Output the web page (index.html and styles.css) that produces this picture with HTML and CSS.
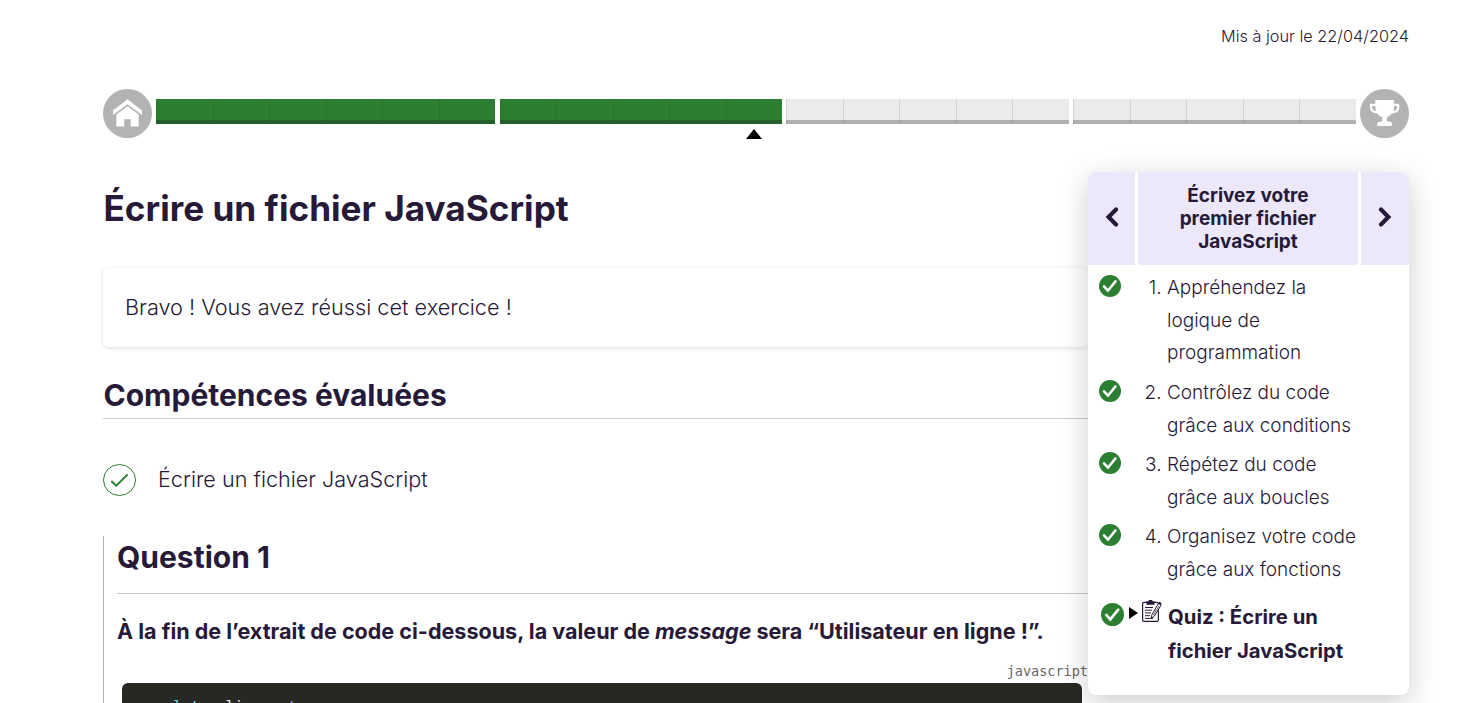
FILE: index.html
```html
<!DOCTYPE html>
<html lang="fr">
<head>
<meta charset="utf-8">
<title>Écrire un fichier JavaScript</title>
<link rel="stylesheet" href="styles.css">
</head>
<body>
<svg class="defs" width="0" height="0" aria-hidden="true">
  <symbol id="done" viewBox="0 0 22 22"><circle cx="11" cy="11" r="11" fill="#2c7f31"/><path d="M5 11.4l3.9 4.3 7.6-9.3" fill="none" stroke="#fff" stroke-width="2.5" stroke-linecap="round"/></symbol>
</svg>
<div class="page">
  <p class="updated">Mis à jour le 22/04/2024</p>
  <nav class="timeline">
    <a class="round"><svg viewBox="0 0 49 49"><path d="M24.5 10.2L10 21.6V26L24.5 15.2 39 26v-4.4z"/><path d="M24.5 17.2L13.4 25.5V37.5h7.8v-7.2h6.5v7.2h8v-12z"/></svg></a>
    <div class="part six done"><i></i><i></i><i></i><i></i><i></i><i></i></div>
    <div class="part five done"><i></i><i></i><i></i><i></i><i class="current"></i></div>
    <div class="part five"><i></i><i></i><i></i><i></i><i></i></div>
    <div class="part five last"><i></i><i></i><i></i><i></i><i></i></div>
    <a class="round"><svg viewBox="0 0 49 49"><path d="M15.3 11h18.8v3.8h5.1v3.8c0 4.2-3.4 5.7-7.4 5.9-1.4 2.1-3.6 3.2-5 4.1v3.2c.5 1.2 5.2.6 5.2 2.8v2.4H17.2v-2.4c0-2.2 4.7-1.6 5.2-2.8v-3.2c-1.4-.9-3.7-2-5-4.1-4-.2-7.4-1.7-7.4-5.9v-3.8h5.3zM12.2 17v1.8c0 2 1.6 3 4 3.3-.6-1.5-.9-3.2-.9-5.1zm22 0c0 1.9-.3 3.6-.9 5.1 2.3-.3 3.7-1.3 3.7-3.3V17z" fill-rule="evenodd"/></svg></a>
  </nav>
  <div class="body">
    <main class="main">
      <h1>Écrire un fichier JavaScript</h1>
      <div class="card">Bravo ! Vous avez réussi cet exercice !</div>
      <h2>Compétences évaluées</h2>
      <div class="skill"><svg viewBox="0 0 33 32"><ellipse cx="16.5" cy="16" rx="16" ry="15.5" fill="none" stroke="#2c7f31"/><path d="M8.3 17l5 4.7 11.3-11.3" fill="none" stroke="#2c7f31" stroke-width="2"/></svg><span>Écrire un fichier JavaScript</span></div>
      <section class="question">
        <h3>Question 1</h3>
        <p class="ask">À la fin de l’extrait de code ci-dessous, la valeur de <em>message</em> sera “Utilisateur en ligne !”.</p>
        <p class="lang">javascript</p>
        <pre class="code"><span class="kw">let</span> online = <span class="val">true</span>;</pre>
      </section>
    </main>
    <aside class="side">
      <header class="sidehead">
        <a><svg viewBox="0 0 14 20"><path d="M11 2.5L3.6 10l7.4 7.5"/></svg></a>
        <strong>Écrivez votre<br>premier fichier<br>JavaScript</strong>
        <a><svg viewBox="0 0 14 20"><path d="M3 2.5l7.4 7.5L3 17.5"/></svg></a>
      </header>
      <ol class="chapters">
        <li><svg class="ok"><use href="#done"/></svg><span class="num">1.</span><span>Appréhendez la<br>logique de<br>programmation</span></li>
        <li><svg class="ok"><use href="#done"/></svg><span class="num">2.</span><span>Contrôlez du code<br>grâce aux conditions</span></li>
        <li><svg class="ok"><use href="#done"/></svg><span class="num">3.</span><span>Répétez du code<br>grâce aux boucles</span></li>
        <li><svg class="ok"><use href="#done"/></svg><span class="num">4.</span><span>Organisez votre code<br>grâce aux fonctions</span></li>
      </ol>
      <div class="quiz">
        <svg class="ok" viewBox="0 0 22 22"><use href="#done" width="22" height="22"/></svg>
        <svg class="caret" viewBox="0 0 9 12"><path d="M0 0l9 6-9 6z"/></svg>
        <svg class="pad" viewBox="0 0 20 22"><rect x=".6" y="2.4" width="15.8" height="19" rx="1.4" fill="#fff" stroke="#271a38" stroke-width="1.2"/><path d="M4.5 1.2h2.2V0h3.6v1.2h2.2v3.6h-8z" fill="#271a38"/><path d="M3 7.5h8M3 10.2h7M3 12.9h6M3 15.7h5M3 18.4h8" stroke="#271a38"/><path d="M16.4 3.5L10 14.5l-.8 4 3.2-2.5L19 5.3z" fill="#fff" stroke="#271a38"/><path d="M16.2 3l1.2-1.2 2.2 1.4-.8 2.1z" fill="#271a38"/><path d="M17 6l-5.6 9" stroke="#271a38" stroke-width=".7"/></svg>
        <strong>Quiz : Écrire un<br>fichier JavaScript</strong>
      </div>
    </aside>
  </div>
</div>
</body>
</html>
```
FILE: styles.css
```css
* { box-sizing: border-box; }
body { margin: 0; height: 703px; overflow: hidden; background: #fff; color: #271a38; font-family: Inter, sans-serif; font-weight: 300; }
h1, h2, h3, p, ol, pre { margin: 0; padding: 0; }
.defs { position: absolute; }
.page { width: 1306px; height: 703px; margin-left: 103px; padding-top: 24px; }
.updated { height: 25px; line-height: 25px; text-align: right; font-size: 16.3px; }
.timeline { display: flex; margin-top: 40px; height: 49px; align-items: center; }
.round { width: 49px; height: 49px; flex: none; border-radius: 50%; background: #b3b3b3; }
.round svg { display: block; width: 49px; height: 49px; fill: #fff; }
.part { display: grid; height: 25px; margin: -4px 0 0 4px; background: #ebebeb; border-bottom: 4px solid #b0b0b0; width: 283px; }
.part.six { width: 339px; grid-template-columns: repeat(6, 1fr); }
.part.five { grid-template-columns: repeat(5, 1fr); }
.part i { position: relative; height: 25px; border-left: 1px solid rgba(0, 0, 0, .1); }
.part.done { background: #2c7f31; border-color: #23612a; }
.part.six + .part { width: 282px; margin-left: 5px; }
.part.last { margin-right: 4px; }
.current::after { content: ""; position: absolute; left: 19px; top: 30px; border: 8px solid transparent; border-top: 0; border-bottom: 10px solid #000; }
.body { position: relative; margin-top: 34px; }
.main { width: 985px; }
h1 { height: 96px; padding: 13px 0 0 .5px; font-size: 35.2px; line-height: 46px; font-weight: 700; }
.card { height: 79px; line-height: 79px; padding-left: 22px; font-size: 21.7px; border-radius: 6px; box-shadow: 0 1px 4px rgba(0, 0, 0, .14); }
h2 { height: 72px; padding: 28px 0 0 .5px; font-size: 30px; line-height: 40px; font-weight: 700; border-bottom: 1px solid #ccc; }
.skill { display: flex; align-items: center; gap: 22px; margin-top: 45px; height: 32px; font-size: 21.6px; line-height: 26px; }
.skill svg { width: 33px; height: 32px; }
.skill span { padding-bottom: 3px; }
.question { margin-top: 40px; border-left: 1px solid #b3b3b3; padding-left: 13px; height: 167px; overflow: hidden; }
h3 { height: 58px; font-size: 30px; line-height: 43px; font-weight: 700; border-bottom: 1px solid #ccc; }
.ask { height: 67px; line-height: 75px; font-size: 21.55px; font-weight: 700; white-space: nowrap; }
.lang { text-align: right; height: 22px; font: 13.5px/20px "DejaVu Sans Mono", monospace; color: #666; }
.code { margin: 0 6px 0 5px; height: 80px; padding: 10px 0 0 50px; border-radius: 6px; background: #272822; color: #f8f8f2; font: 14.8px/26px "DejaVu Sans Mono", monospace; }
.kw { color: #66d9ef; font-style: italic; }
.val { color: #ae81ff; }
.side { position: absolute; right: 0; top: 0; width: 321px; height: 523px; border-radius: 8px; background: #fff; box-shadow: 0 8px 30px rgba(0, 0, 0, .2); }
.sidehead { display: grid; grid-template-columns: 47px 220px 48px; gap: 3px; height: 93px; overflow: hidden; border-radius: 8px 8px 0 0; text-align: center; font-size: 19px; line-height: 23px; }
.sidehead > * { background: #ece8f9; display: block; padding-top: 12px; font-weight: 700; }
.sidehead a { display: flex; justify-content: center; align-items: center; padding: 0 0 3px; }
.sidehead svg { width: 14px; height: 20px; fill: none; stroke: #271a38; stroke-width: 4.2; stroke-linecap: round; }
.chapters { list-style: none; padding: 7px 0 0 11px; font-size: 19px; line-height: 33px; }
.chapters li { display: flex; margin-bottom: 6px; white-space: nowrap; }
.chapters li:first-child { line-height: 32.7px; margin-bottom: 5.9px; }
.ok { flex: none; width: 22px; height: 22px; margin-top: 4px; }
li:first-child .ok { margin-top: 3px; }
.num { width: 46px; padding-right: 5.5px; text-align: right; }
.quiz { display: flex; padding-left: 13px; margin-top: 14px; font-size: 20.3px; line-height: 34px; white-space: nowrap; }
.quiz .ok { width: 23px; height: 23px; margin-top: 3px; }
.caret { width: 9px; height: 12px; margin: 7px 0 0 5px; }
.pad { width: 20px; height: 22px; margin: 0 6px 0 4px; }
.quiz strong { font-weight: 700; }
```
